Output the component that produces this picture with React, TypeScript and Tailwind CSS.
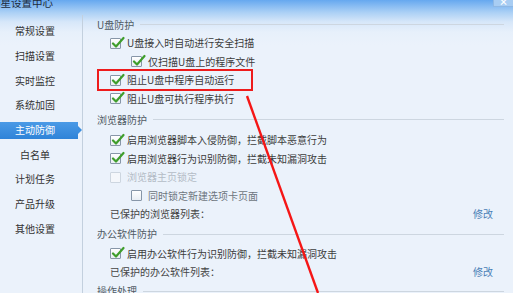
import React from "react";

const FONT = { fontFamily: '"Noto Sans CJK SC", "Noto Sans", sans-serif' };

function Check({ checked, disabled }: { checked?: boolean; disabled?: boolean }) {
  return (
    <div
      className={
        "relative w-[11px] h-[11px] shrink-0 border rounded-[1px] " +
        (disabled
          ? "border-[#cdd6e0] bg-[#f4f7fb]"
          : "border-[#8796a8] bg-[linear-gradient(to_bottom,#ffffff,#e9eef4)]")
      }
    >
      {checked && (
        <svg
          className="absolute left-[0px] top-[-3px]"
          width="14"
          height="13"
          viewBox="0 0 14 13"
        >
          <path
            d="M2 7.5 L5 10.5 L12.5 2"
            fill="none"
            stroke="#3f9e2c"
            strokeWidth="2.2"
            strokeLinecap="round"
            strokeLinejoin="round"
          />
        </svg>
      )}
    </div>
  );
}

function Row({
  sub,
  checked,
  disabled,
  textClass,
  children,
}: {
  sub?: boolean;
  checked?: boolean;
  disabled?: boolean;
  textClass?: string;
  children: React.ReactNode;
}) {
  return (
    <div className={"h-[18.5px] flex items-center gap-[6px] " + (sub ? "pl-[48px]" : "pl-[27px]")}>
      <Check checked={checked} disabled={disabled} />
      <span className={"text-[10px] leading-none whitespace-nowrap " + (textClass ?? "text-[#3c3c3c]")}>
        {children}
      </span>
    </div>
  );
}

function Header({ h, children }: { h: string; children: React.ReactNode }) {
  return (
    <div className={"flex items-center gap-[6px] pl-[14px] " + h}>
      <span className="text-[10px] leading-none text-[#505a64] whitespace-nowrap">{children}</span>
      <div className="flex-1 h-px bg-[#cdd6e0]" />
    </div>
  );
}

function ListRow({ children }: { children: React.ReactNode }) {
  return (
    <div className="h-[18.5px] flex items-center justify-between pl-[27px] pr-[11px]">
      <span className="text-[10px] leading-none text-[#444] whitespace-nowrap">{children}</span>
      <span className="text-[10px] leading-none text-[#4a80b6]">修改</span>
    </div>
  );
}

const NAV = ["常规设置", "扫描设置", "实时监控", "系统加固", "主动防御", "白名单", "计划任务", "产品升级", "其他设置"];

export default function App() {
  return (
    <div
      style={FONT}
      className="relative w-[513px] h-[293px] overflow-hidden bg-[linear-gradient(to_bottom,#66a8ef_0px,#a9cff5_12px,#d7e7f9_22px,#e7f0fb_32px,#ebf2fb_45px)]"
    >
      {/* title bar */}
      <div className="h-[15px] flex items-start justify-between">
        <span className="ml-[-10px] mt-[-3px] text-[10.5px] leading-[12px] text-[#1d2b3b] whitespace-nowrap">
          瑞星设置中心
        </span>
        <div className="w-[20px] h-[7px] mr-0 bg-[#a8cdf3] border-l border-b border-[#8fb8e4] flex items-end justify-center overflow-hidden">
          <span className="text-[9px] leading-[8px] text-white font-bold">×</span>
        </div>
      </div>

      <div className="flex h-[278px]">
        {/* sidebar */}
        <div className="w-[83px] shrink-0 border-r border-[#c3d0de] pt-[4px]">
          {NAV.map((n) => (
            <div key={n} className="h-[24.7px] flex items-center">
              {n === "主动防御" ? (
                <div className="relative w-[78px] h-[17px] bg-[linear-gradient(to_bottom,#4a9ae6,#2f83d8)] flex items-center">
                  <span className="w-[70px] text-center text-[10px] leading-none text-white">{n}</span>
                  <div className="absolute right-[-4px] top-[4.5px] w-0 h-0 border-y-[4px] border-y-transparent border-l-[4px] border-l-[#3b8ee0]" />
                </div>
              ) : (
                <span className="w-[70px] text-center text-[10px] leading-none text-[#333]">{n}</span>
              )}
            </div>
          ))}
        </div>

        {/* content */}
        <div className="flex-1 pr-[9px]">
          <Header h="h-[19px]">U盘防护</Header>
          <Row checked>U盘接入时自动进行安全扫描</Row>
          <Row sub checked>仅扫描U盘上的程序文件</Row>
          <Row checked>阻止U盘中程序自动运行</Row>
          <Row checked>阻止U盘可执行程序执行</Row>

          <Header h="h-[23px]">浏览器防护</Header>
          <Row checked>启用浏览器脚本入侵防御，拦截脚本恶意行为</Row>
          <Row checked>启用浏览器行为识别防御，拦截未知漏洞攻击</Row>
          <Row disabled textClass="text-[#b4bcc6]">浏览器主页锁定</Row>
          <Row sub textClass="text-[#6e7680]">同时锁定新建选项卡页面</Row>
          <ListRow>已保护的浏览器列表：</ListRow>

          <Header h="h-[21px]">办公软件防护</Header>
          <Row checked>启用办公软件行为识别防御，拦截未知漏洞攻击</Row>
          <ListRow>已保护的办公软件列表：</ListRow>
          <Header h="h-[19px]">操作处理</Header>
        </div>
      </div>

      {/* red annotation box */}
      <div className="absolute left-[97px] top-[69px] w-[156px] h-[22px] border-2 border-[#ee1c1c]" />

      {/* red annotation line */}
      <svg className="absolute left-0 top-0 pointer-events-none" width="513" height="293">
        <line x1="247" y1="96" x2="318" y2="293" stroke="#f51616" strokeWidth="2.4" />
      </svg>
    </div>
  );
}
